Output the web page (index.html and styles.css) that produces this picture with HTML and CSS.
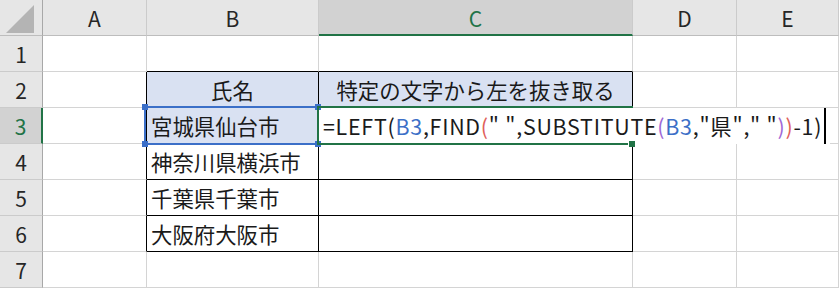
FILE: index.html
```html
<!DOCTYPE html>
<html lang="ja">
<head>
  <meta charset="UTF-8" />
  <title>特定の文字から左を抜き取る</title>
  <link rel="stylesheet" href="styles.css">
</head>
<body>

  <div class="sheet">
    <!-- 見出し行 -->
    <div class="corner"><span class="tri"></span></div>
    <div class="colhead">A</div>
    <div class="colhead">B</div>
    <div class="colhead active">C</div>
    <div class="colhead">D</div>
    <div class="colhead">E</div>

    <!-- 1 -->
    <div class="rowhead">1</div>
    <div class="cell"></div>
    <div class="cell edge-t"></div>
    <div class="cell edge-t"></div>
    <div class="cell"></div>
    <div class="cell"></div>

    <!-- 2 -->
    <div class="rowhead">2</div>
    <div class="cell edge-l"></div>
    <div class="cell tbl head center">氏名</div>
    <div class="cell tbl head center">特定の文字から左を抜き取る</div>
    <div class="cell"></div>
    <div class="cell"></div>

    <!-- 3 -->
    <div class="rowhead active">3</div>
    <div class="cell edge-l"></div>
    <div class="cell tbl ref">宮城県仙台市
      <span class="ref-box">
        <i class="knob k-tl"></i><i class="knob k-tr"></i>
        <i class="knob k-bl"></i><i class="knob k-br"></i>
      </span>
    </div>
    <div class="cell tbl editing">
      <div class="editor">=LEFT(<span class="f-ref">B3</span>,FIND<span class="f-red">(</span>" ",SUBSTITUTE<span class="f-pur">(</span><span class="f-ref">B3</span>,"県"," "<span class="f-pur">)</span><span class="f-red">)</span>-1)<span class="caret"></span></div>
      <span class="edit-frame"><i class="fill-knob"></i></span>
    </div>
    <div class="cell"></div>
    <div class="cell"></div>

    <!-- 4 -->
    <div class="rowhead">4</div>
    <div class="cell edge-l"></div>
    <div class="cell tbl">神奈川県横浜市</div>
    <div class="cell tbl"></div>
    <div class="cell"></div>
    <div class="cell"></div>

    <!-- 5 -->
    <div class="rowhead">5</div>
    <div class="cell edge-l"></div>
    <div class="cell tbl">千葉県千葉市</div>
    <div class="cell tbl"></div>
    <div class="cell"></div>
    <div class="cell"></div>

    <!-- 6 -->
    <div class="rowhead">6</div>
    <div class="cell edge-l"></div>
    <div class="cell tbl">大阪府大阪市</div>
    <div class="cell tbl"></div>
    <div class="cell"></div>
    <div class="cell"></div>

    <!-- 7 -->
    <div class="rowhead">7</div>
    <div class="cell"></div>
    <div class="cell"></div>
    <div class="cell"></div>
    <div class="cell"></div>
    <div class="cell"></div>
  </div>

</body>
</html>
```

FILE: styles.css
```css
body {
  margin: 0;
  background: #fff;
  font-family: "Noto Sans CJK JP", sans-serif;
  overflow: hidden;
}

/* シート全体 */
.sheet {
  display: grid;
  grid-template-columns: 43px 104px 172px 314px 104px 102px;
  grid-template-rows: repeat(8, 36px);
  width: 840px;
}

.sheet > div {
  box-sizing: border-box;
}

/* 見出し */
.corner,
.colhead,
.rowhead {
  background: #e6e6e6;
  color: #262626;
  font-size: 21px;
  display: flex;
  align-items: center;
  justify-content: center;
}

.corner {
  border-right: 1px solid #a8a8a8;
  border-bottom: 1px solid #bdbdbd;
  position: relative;
}

.tri {
  width: 0;
  height: 0;
  border-left: 28px solid transparent;
  border-bottom: 28px solid #b4b4b4;
  margin: 2px 0 0 -2px;
}

.colhead {
  border-right: 1px solid #cbcbcb;
  border-bottom: 1px solid #bdbdbd;
  padding-top: 1px;
}

.rowhead {
  border-right: 1px solid #a8a8a8;
  border-bottom: 1px solid #cbcbcb;
}

.colhead.active {
  background: #d2d2d2;
  color: #217346;
  border-bottom: 2px solid #217346;
}

.rowhead.active {
  background: #d2d2d2;
  color: #217346;
  border-right: 2px solid #217346;
}

/* セル */
.cell {
  border-right: 1px solid #d4d4d4;
  border-bottom: 1px solid #d4d4d4;
  font-size: 21.4px;
  color: #1a1a1a;
  line-height: 35px;
  padding-left: 4px;
  white-space: nowrap;
}

.center {
  text-align: center;
  padding-left: 0;
}

.edge-l {
  border-right-color: #000;
}

.edge-t {
  border-bottom-color: #000;
}

.tbl {
  border-right-color: #000;
  border-bottom-color: #000;
}

.head {
  background: #d9e1f2;
}

/* 参照セル (B3) */
.ref {
  background: #d9e1f2;
  position: relative;
}

.ref-box {
  position: absolute;
  top: -2px;
  left: -3px;
  right: -1px;
  bottom: -2px;
  border: 2px solid #3b6fc8;
  z-index: 3;
}

.knob {
  position: absolute;
  width: 6px;
  height: 6px;
  background: #3b6fc8;
  z-index: 5;
}

.k-tl { top: -4px; left: -4px; }
.k-tr { top: -4px; right: -4px; }
.k-bl { bottom: -4px; left: -4px; }
.k-br { bottom: -4px; right: -4px; }

/* 編集中セル (C3) */
.editing {
  position: relative;
  padding-left: 0;
}

.editor {
  position: absolute;
  top: 0;
  left: 0;
  width: 507px;
  height: 36px;
  background: #fff;
  padding-left: 4px;
  line-height: 35px;
  letter-spacing: 0.75px;
  color: #1a1a1a;
  z-index: 2;
}

.edit-frame {
  position: absolute;
  top: -2px;
  left: -2px;
  right: -1px;
  bottom: -2px;
  border: 2px solid #217346;
  border-right: none;
  z-index: 4;
}

.fill-knob {
  position: absolute;
  right: -2px;
  bottom: -4px;
  width: 6px;
  height: 6px;
  background: #217346;
  border-left: 1px solid #fff;
}

.f-ref { color: #3c6fc7; }
.f-red { color: #e0605a; }
.f-pur { color: #a068d6; }

.caret {
  display: inline-block;
  width: 2px;
  height: 36px;
  background: #000;
  vertical-align: top;
  margin-left: 2px;
}
```
